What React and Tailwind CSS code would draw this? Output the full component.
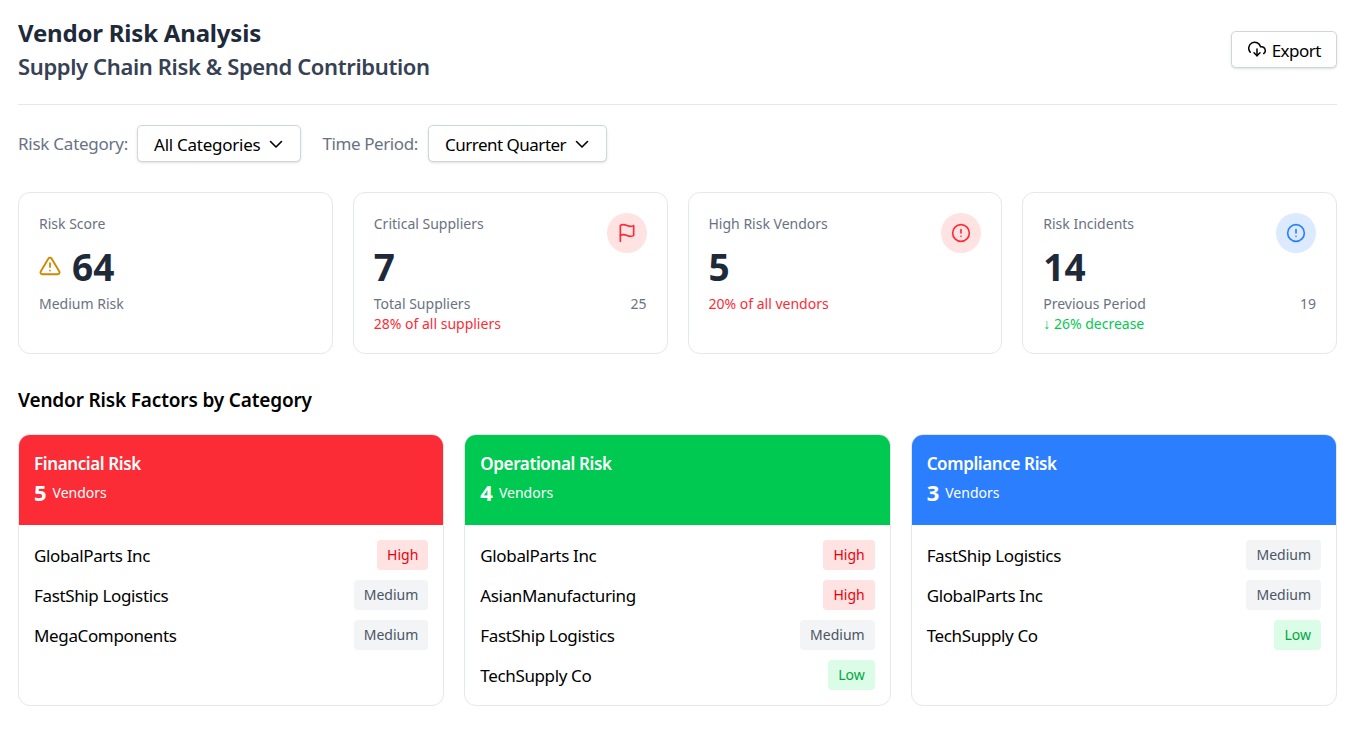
import { FiAlertCircle, FiAlertTriangle, FiDownloadCloud, FiFlag } from "react-icons/fi";

const categories = [
  {
    title: "Financial Risk",
    count: 5,
    header: "bg-red-500",
    vendors: [
      ["GlobalParts Inc", "High"],
      ["FastShip Logistics", "Medium"],
      ["MegaComponents", "Medium"],
    ],
  },
  {
    title: "Operational Risk",
    count: 4,
    header: "bg-green-500",
    vendors: [
      ["GlobalParts Inc", "High"],
      ["AsianManufacturing", "High"],
      ["FastShip Logistics", "Medium"],
      ["TechSupply Co", "Low"],
    ],
  },
  {
    title: "Compliance Risk",
    count: 3,
    header: "bg-blue-500",
    vendors: [
      ["FastShip Logistics", "Medium"],
      ["GlobalParts Inc", "Medium"],
      ["TechSupply Co", "Low"],
    ],
  },
];

const badgeStyles = {
  High: "bg-red-100 text-red-600",
  Medium: "bg-gray-100 text-gray-600",
  Low: "bg-green-100 text-green-600",
};

function SelectButton({ children, tracking }) {
  return (
    <button className="flex h-[37px] items-center gap-2 rounded-[5px] border border-gray-300 bg-white px-4 text-[17px] text-black shadow-sm">
      <span className={`pt-[2px] ${tracking}`}>{children}</span>
      <svg width="16" height="16" viewBox="0 0 16 16" fill="none" stroke="currentColor" strokeWidth="1.6" strokeLinecap="round" strokeLinejoin="round">
        <path d="M2.5 5.5 8 11l5.500-5.500" />
      </svg>
    </button>
  );
}

function StatCard({ label, value, icon, iconBg, children, valueIcon }) {
  return (
    <div className="relative h-[162px] rounded-xl border border-gray-200 bg-white p-5">
      <p className="pt-px text-sm leading-5 text-gray-500">{label}</p>
      <div className="mt-[13px] flex h-10 items-center gap-[11px]">
        {valueIcon}
        <span className="text-[37px] font-bold text-gray-800">{value}</span>
      </div>
      <div className="mt-[7px] text-sm leading-5 text-gray-500">{children}</div>
      {icon && (
        <div className={`absolute top-5 right-5 flex h-10 w-10 items-center justify-center rounded-full ${iconBg}`}>
          {icon}
        </div>
      )}
    </div>
  );
}

function VendorCard({ category }) {
  return (
    <div className="h-[272px] overflow-hidden rounded-xl border border-gray-200 bg-white">
      <div className={`h-[90px] p-[15px] text-white ${category.header}`}>
        <h3 className="text-[17px] leading-[27px] font-semibold tracking-[-0.38px]">{category.title}</h3>
        <div className="flex items-center gap-1.5">
          <span className="text-[22px] leading-[30px] font-bold">{category.count}</span>
          <span className="pt-[2px] text-sm">Vendors</span>
        </div>
      </div>
      <div className="flex flex-col gap-2.5 p-[15px]">
        {category.vendors.map(([name, level]) => (
          <div key={name} className="flex h-[30px] items-center justify-between">
            <span className="pt-px text-[17px] tracking-[-0.36px] text-black">{name}</span>
            <span className={`rounded px-2.5 py-[5px] text-sm leading-5 ${badgeStyles[level]}`}>{level}</span>
          </div>
        ))}
      </div>
    </div>
  );
}

export default function App() {
  return (
    <div className="min-h-[730px] bg-white px-[18px] pt-[15px] font-['Noto_Sans',sans-serif]">
      {/* Header */}
      <div className="flex items-center justify-between border-b border-gray-200 pb-[21px]">
        <div>
          <h1 className="text-2xl leading-9 font-bold tracking-[-0.2px] text-gray-800">Vendor Risk Analysis</h1>
          <h2 className="pb-[2px] text-[22px] leading-[30px] font-semibold tracking-[-0.37px] text-gray-700">Supply Chain Risk &amp; Spend Contribution</h2>
        </div>
        <button className="flex h-[37px] items-center gap-1.5 rounded-[5px] border border-gray-300 bg-white pr-[15px] pl-4 text-[17px] tracking-[-0.5px] text-black shadow-sm">
          <FiDownloadCloud size={18} />
          <span className="pt-[3px]">Export</span>
        </button>
      </div>

      {/* Filters */}
      <div className="mt-5 flex items-center">
        <span className="mr-[9px] pt-px text-[17px] tracking-[-0.25px] text-gray-500">Risk Category:</span>
        <SelectButton tracking="tracking-[-0.26px]">All Categories</SelectButton>
        <span className="mr-2.5 ml-[21px] pt-px text-[17px] tracking-[-0.4px] text-gray-500">Time Period:</span>
        <SelectButton tracking="tracking-[-0.5px]">Current Quarter</SelectButton>
      </div>

      {/* Stats */}
      <div className="mt-[30px] grid grid-cols-4 gap-5">
        <StatCard label="Risk Score" value="64" valueIcon={<FiAlertTriangle size={22} className="-mt-0.5 text-yellow-600" />}>
          Medium Risk
        </StatCard>
        <StatCard label="Critical Suppliers" value="7" icon={<FiFlag size={20} className="text-red-500" />} iconBg="bg-red-100">
          <div className="flex justify-between">
            <span>Total Suppliers</span>
            <span>25</span>
          </div>
          <div className="text-red-500">28% of all suppliers</div>
        </StatCard>
        <StatCard label="High Risk Vendors" value="5" icon={<FiAlertCircle size={20} className="text-red-500" />} iconBg="bg-red-100">
          <div className="text-red-500">20% of all vendors</div>
        </StatCard>
        <StatCard label="Risk Incidents" value="14" icon={<FiAlertCircle size={20} className="text-blue-500" />} iconBg="bg-blue-100">
          <div className="flex justify-between">
            <span>Previous Period</span>
            <span>19</span>
          </div>
          <div className="text-green-500">↓ 26% decrease</div>
        </StatCard>
      </div>

      {/* Categories */}
      <h2 className="mt-[32px] text-[19px] leading-7 font-semibold tracking-[-0.16px] text-black">Vendor Risk Factors by Category</h2>
      <div className="mt-5 grid grid-cols-3 gap-5">
        {categories.map((category) => (
          <VendorCard key={category.title} category={category} />
        ))}
      </div>
    </div>
  );
}
